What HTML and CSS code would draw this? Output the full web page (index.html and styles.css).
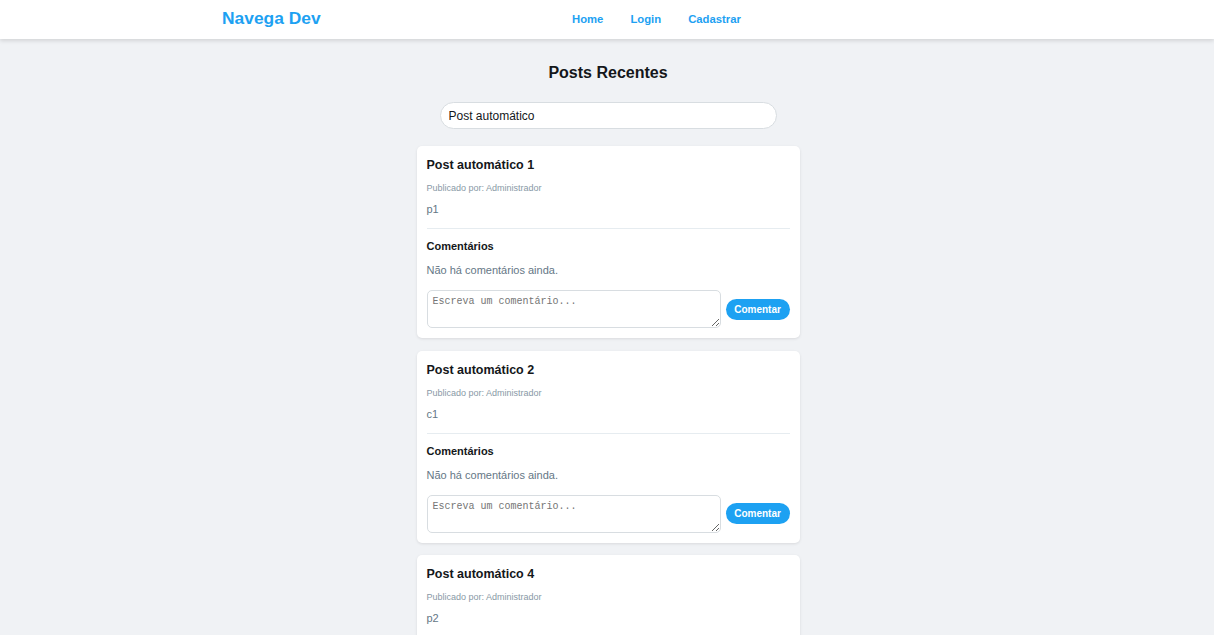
FILE: index.html
```html
<!DOCTYPE html>
<html lang="pt-BR">
<head>
<meta charset="utf-8">
<title>Navega Dev</title>
<link rel="stylesheet" href="styles.css">
</head>
<body>
<header class="topbar">
  <div class="topbar-inner">
    <div class="logo">Navega Dev</div>
    <nav class="nav">
      <a href="#">Home</a>
      <a href="#">Login</a>
      <a href="#">Cadastrar</a>
    </nav>
  </div>
</header>
<main class="main">
  <h2 class="page-title">Posts Recentes</h2>
  <input class="search" type="text" value="Post automático">
  <div class="feed">
    <article class="card">
      <h3 class="post-title">Post automático 1</h3>
      <div class="meta">Publicado por: Administrador</div>
      <p class="content">p1</p>
      <hr class="divider">
      <h4 class="comments-title">Comentários</h4>
      <p class="no-comments">Não há comentários ainda.</p>
      <div class="comment-form">
        <textarea class="comment-input" placeholder="Escreva um comentário..."></textarea>
        <button class="comment-btn">Comentar</button>
      </div>
    </article>
    <article class="card">
      <h3 class="post-title">Post automático 2</h3>
      <div class="meta">Publicado por: Administrador</div>
      <p class="content">c1</p>
      <hr class="divider">
      <h4 class="comments-title">Comentários</h4>
      <p class="no-comments">Não há comentários ainda.</p>
      <div class="comment-form">
        <textarea class="comment-input" placeholder="Escreva um comentário..."></textarea>
        <button class="comment-btn">Comentar</button>
      </div>
    </article>
    <article class="card">
      <h3 class="post-title">Post automático 4</h3>
      <div class="meta">Publicado por: Administrador</div>
      <p class="content">p2</p>
      <hr class="divider">
      <h4 class="comments-title">Comentários</h4>
      <p class="no-comments">Não há comentários ainda.</p>
      <div class="comment-form">
        <textarea class="comment-input" placeholder="Escreva um comentário..."></textarea>
        <button class="comment-btn">Comentar</button>
      </div>
    </article>
  </div>
</main>
</body>
</html>
```
FILE: styles.css
```css
* { box-sizing: border-box; }
html, body { margin: 0; padding: 0; }
body {
  background: #f0f2f5;
  font-family: "Liberation Sans", Arial, sans-serif;
  color: #14171a;
}
.topbar {
  background: #fff;
  height: 39px;
  box-shadow: 0 2px 4px rgba(0,0,0,0.12);
  position: relative;
  z-index: 1;
}
.topbar-inner {
  width: 770px;
  margin: 0 auto;
  height: 100%;
  display: flex;
  align-items: center;
  padding-bottom: 2px;
}
.logo {
  flex: 0 0 350px;
  color: #1da1f2;
  font-weight: bold;
  font-size: 17.4px;
}
.nav { display: flex; gap: 27px; }
.nav a {
  color: #1da1f2;
  font-weight: bold;
  font-size: 11.3px;
  text-decoration: none;
}
.main {
  display: flex;
  flex-direction: column;
  align-items: center;
  padding-left: 2px;
}
.page-title {
  margin: 24px 0 19px;
  font-size: 16px;
  line-height: 20px;
  font-weight: bold;
  color: #14171a;
}
.search {
  width: 337px;
  height: 27px;
  border: 1px solid #d8dde1;
  border-radius: 14px;
  padding: 0 8px;
  font-family: "Liberation Sans", Arial, sans-serif;
  font-size: 12px;
  color: #14171a;
  background: #fff;
  outline: none;
}
.feed {
  margin-top: 17px;
  width: 383px;
  display: flex;
  flex-direction: column;
  gap: 12.5px;
}
.card {
  background: #fff;
  border-radius: 5px;
  box-shadow: 0 1px 3px rgba(0,0,0,0.1);
  padding: 12px 10px 10px;
}
.post-title {
  margin: 0 0 8px;
  font-size: 12.5px;
  line-height: 15px;
  font-weight: bold;
  color: #14171a;
}
.meta {
  font-size: 9px;
  line-height: 14px;
  color: #8899a6;
  margin-bottom: 7px;
}
.content {
  margin: 0 0 11px;
  font-size: 11px;
  line-height: 15px;
  color: #657786;
}
.divider {
  border: 0;
  border-top: 1px solid #e6ecf0;
  margin: 0 0 10px;
}
.comments-title {
  margin: 0 0 10px;
  font-size: 11px;
  line-height: 14px;
  font-weight: bold;
  color: #14171a;
}
.no-comments {
  margin: 0 0 12px;
  font-size: 11px;
  line-height: 15px;
  color: #657786;
}
.comment-form {
  display: flex;
  align-items: center;
  gap: 5px;
}
.comment-input {
  flex: 1;
  height: 38px;
  border: 1px solid #d8dde1;
  border-radius: 5px;
  padding: 5px 5px;
  font-family: "Liberation Mono", "DejaVu Sans Mono", monospace;
  font-size: 10px;
  resize: vertical;
  outline: none;
}
.comment-input::placeholder { color: #757575; }
.comment-btn {
  width: 64px;
  height: 21px;
  border: 0;
  border-radius: 11px;
  background: #1da1f2;
  color: #fff;
  font-family: "Liberation Sans", Arial, sans-serif;
  font-weight: bold;
  font-size: 10px;
  padding: 0;
}
```
